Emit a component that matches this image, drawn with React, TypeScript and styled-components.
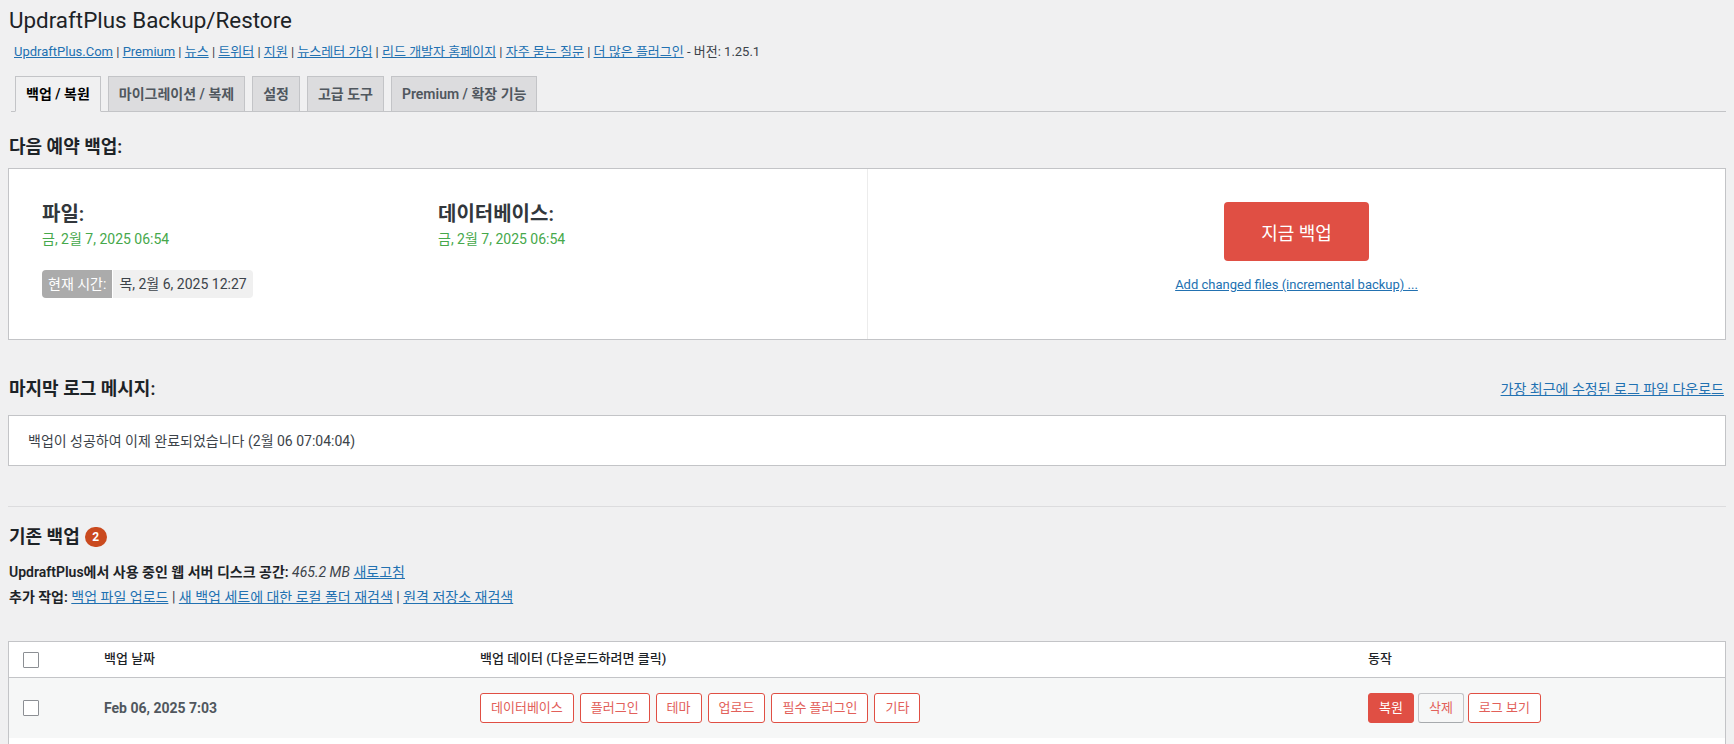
import styled, { createGlobalStyle } from 'styled-components';

const GlobalStyle = createGlobalStyle`
  html, body {
    margin: 0;
    padding: 0;
    background: #f0f0f1;
  }
  body {
    font-family: "Segoe UI", Roboto, "Noto Sans CJK KR", sans-serif;
    font-size: 13px;
    line-height: 1.4em;
    color: #3c434a;
  }
  a {
    color: #2271b1;
  }
`;

const Wrap = styled.div`
  padding: 0 8px;
`;

const Title = styled.h1`
  margin: 0;
  padding: 5px 0 0 1px;
  font-size: 22.4px;
  line-height: 30px;
  font-weight: 400;
  color: #1d2327;
`;

const LinksRow = styled.div`
  margin-top: 8px;
  padding-left: 6px;
  line-height: 18px;
  font-size: 13px;
`;

const Tabs = styled.nav`
  display: flex;
  align-items: flex-end;
  gap: 7px;
  margin: 15px 0 0 3px;
  padding-left: 4px;
  border-bottom: 1px solid #c3c4c7;
`;

const Tab = styled.a<{ $active?: boolean }>`
  margin-bottom: -1px;
  padding: 5px 10px;
  border: 1px solid #c3c4c7;
  border-bottom-color: ${(p) => (p.$active ? '#f0f0f1' : '#c3c4c7')};
  background: ${(p) => (p.$active ? '#f0f0f1' : '#dcdcde')};
  color: ${(p) => (p.$active ? '#000' : '#50575e')};
  font-size: 14px;
  line-height: 24px;
  font-weight: 600;
  text-decoration: none;
  white-space: nowrap;
`;

const SectionTitle = styled.h2<{ $top: number }>`
  margin: ${(p) => p.$top}px 0 0 1px;
  font-size: 18px;
  line-height: 24px;
  font-weight: 600;
  color: #1d2327;
  display: flex;
  align-items: center;
  gap: 5px;
`;

const ScheduleBox = styled.div`
  margin-top: 9px;
  background: #fff;
  border: 1px solid #c3c4c7;
  display: grid;
  grid-template-columns: 1fr 1fr;
`;

const ScheduleTimes = styled.div`
  padding: 32px 33px 41px;
`;

const TimesRow = styled.div`
  display: grid;
  grid-template-columns: 1fr 1fr;
`;

const TimeLabel = styled.div`
  font-size: 20px;
  line-height: 26px;
  font-weight: 600;
  color: #32373c;
`;

const TimeValue = styled.div`
  margin-top: 2px;
  font-size: 14px;
  line-height: 20px;
  color: #46a84b;
`;

const CurrentTime = styled.div`
  margin-top: 21px;
  display: inline-flex;
  height: 28px;
  border-radius: 4px;
  overflow: hidden;
  font-size: 14px;
  line-height: 28px;
`;

const CurrentLabel = styled.span`
  padding: 0 6px;
  background: #ababab;
  color: #fff;
  border-right: 1px solid #fff;
`;

const CurrentValue = styled.span`
  padding: 0 6px;
  background: #f0f0f0;
  color: #3c434a;
`;

const NowPanel = styled.div`
  border-left: 1px solid #ececec;
  display: flex;
  flex-direction: column;
  align-items: center;
  padding-top: 33px;
`;

const BackupNowButton = styled.button`
  width: 145px;
  height: 59px;
  border: none;
  border-radius: 4px;
  background: #e04f44;
  color: #fff;
  font-family: inherit;
  font-size: 18px;
  cursor: pointer;
`;

const SmallLink = styled.a`
  margin-top: 15px;
  font-size: 13px;
  line-height: 18px;
`;

const LogHeader = styled.div`
  margin-top: 37px;
  display: flex;
  justify-content: space-between;
  align-items: center;
  padding-right: 2px;
`;

const LogLink = styled.a`
  font-size: 14px;
  line-height: 24px;
`;

const LogBox = styled.div`
  margin-top: 14px;
  padding: 14px 19px 12px;
  background: #fff;
  border: 1px solid #c3c4c7;
  line-height: 23px;
  font-size: 14px;
`;

const Divider = styled.hr`
  margin: 40px 0 0;
  border: 0;
  border-top: 1px solid #dcdcde;
`;

const CountBadge = styled.span`
  display: inline-flex;
  align-items: center;
  justify-content: center;
  min-width: 22px;
  height: 20px;
  border-radius: 10px;
  background: #ca4a1f;
  color: #fff;
  font-size: 12px;
  font-weight: 700;
  line-height: 20px;
`;

const InfoLines = styled.div`
  margin-top: 11px;
  line-height: 25px;
  font-size: 14px;
  padding-left: 1px;
`;

const Label = styled.strong`
  font-weight: 600;
  color: #1d2327;
`;

const BackupTable = styled.div`
  margin-top: 31px;
  background: #fff;
  border: 1px solid #c3c4c7;
`;

const Row = styled.div<{ $head?: boolean; $alt?: boolean }>`
  display: grid;
  grid-template-columns: 85px 376px 888px 1fr;
  align-items: center;
  height: ${(p) => (p.$head ? '35px' : '60px')};
  background: ${(p) => (p.$alt ? '#f6f7f7' : '#fff')};
  border-bottom: ${(p) => (p.$head ? '1px solid #c3c4c7' : 'none')};
`;

const Cell = styled.div<{ $head?: boolean }>`
  padding-left: 10px;
  font-size: 13px;
  font-weight: ${(p) => (p.$head ? 500 : 400)};
  color: #1d2327;
  display: flex;
  align-items: center;
`;

const CheckCell = styled.div`
  padding-left: 14px;
  display: flex;
  align-items: center;
`;

const Checkbox = styled.input.attrs({ type: 'checkbox' })`
  appearance: none;
  margin: 0;
  width: 16px;
  height: 16px;
  border: 1px solid #8c8f94;
  border-radius: 1px;
  background: #fff;
`;

const BackupDate = styled.div`
  padding-left: 10px;
  font-size: 14px;
  font-weight: 700;
  color: #50575e;
`;

const ButtonGroup = styled.div<{ $gap: number }>`
  padding-left: 10px;
  display: flex;
  gap: ${(p) => p.$gap}px;
`;

const SmallButton = styled.button<{ $variant?: 'outline' | 'solid' | 'plain' }>`
  height: 30px;
  padding: 0 10px;
  border-radius: 3px;
  font-family: inherit;
  font-size: 13px;
  line-height: 28px;
  cursor: pointer;
  border: 1px solid ${(p) => (p.$variant === 'plain' ? '#c3c4c7' : '#e04f44')};
  border-bottom-color: ${(p) => (p.$variant === 'plain' ? '#a7aaad' : '#e04f44')};
  background: ${(p) =>
    p.$variant === 'solid' ? '#e04f44' : p.$variant === 'plain' ? '#f6f7f7' : '#fff'};
  color: ${(p) => (p.$variant === 'solid' ? '#fff' : '#e2605a')};
`;

const links = [
  'UpdraftPlus.Com',
  'Premium',
  '뉴스',
  '트위터',
  '지원',
  '뉴스레터 가입',
  '리드 개발자 홈페이지',
  '자주 묻는 질문',
  '더 많은 플러그인',
];

const tabs = ['백업 / 복원', '마이그레이션 / 복제', '설정', '고급 도구', 'Premium / 확장 기능'];

const entities = ['데이터베이스', '플러그인', '테마', '업로드', '필수 플러그인', '기타'];

const backups = [
  { date: 'Feb 06, 2025 7:03', alt: true },
  { date: 'Feb 06, 2025 6:54', alt: false },
];

const App = () => {
  return (
    <Wrap>
      <GlobalStyle />
      <Title>UpdraftPlus Backup/Restore</Title>
      <LinksRow>
        {links.map((l, i) => (
          <span key={l}>
            <a href="#">{l}</a>
            {i < links.length - 1 ? ' | ' : ''}
          </span>
        ))}{' '}
        - 버전: 1.25.1
      </LinksRow>

      <Tabs>
        {tabs.map((t, i) => (
          <Tab key={t} href="#" $active={i === 0}>
            {t}
          </Tab>
        ))}
      </Tabs>

      <SectionTitle $top={23}>다음 예약 백업:</SectionTitle>
      <ScheduleBox>
        <ScheduleTimes>
          <TimesRow>
            <div>
              <TimeLabel>파일:</TimeLabel>
              <TimeValue>금, 2월 7, 2025 06:54</TimeValue>
            </div>
            <div>
              <TimeLabel>데이터베이스:</TimeLabel>
              <TimeValue>금, 2월 7, 2025 06:54</TimeValue>
            </div>
          </TimesRow>
          <CurrentTime>
            <CurrentLabel>현재 시간:</CurrentLabel>
            <CurrentValue>목, 2월 6, 2025 12:27</CurrentValue>
          </CurrentTime>
        </ScheduleTimes>
        <NowPanel>
          <BackupNowButton>지금 백업</BackupNowButton>
          <SmallLink href="#">Add changed files (incremental backup) ...</SmallLink>
        </NowPanel>
      </ScheduleBox>

      <LogHeader>
        <SectionTitle $top={0}>마지막 로그 메시지:</SectionTitle>
        <LogLink href="#">가장 최근에 수정된 로그 파일 다운로드</LogLink>
      </LogHeader>
      <LogBox>백업이 성공하여 이제 완료되었습니다 (2월 06 07:04:04)</LogBox>

      <Divider />

      <SectionTitle $top={18}>
        기존 백업 <CountBadge>2</CountBadge>
      </SectionTitle>
      <InfoLines>
        <div>
          <Label>UpdraftPlus에서 사용 중인 웹 서버 디스크 공간:</Label> <em>465.2 MB</em>{' '}
          <a href="#">새로고침</a>
        </div>
        <div>
          <Label>추가 작업:</Label> <a href="#">백업 파일 업로드</a> |{' '}
          <a href="#">새 백업 세트에 대한 로컬 폴더 재검색</a> | <a href="#">원격 저장소 재검색</a>
        </div>
      </InfoLines>

      <BackupTable>
        <Row $head>
          <CheckCell>
            <Checkbox />
          </CheckCell>
          <Cell $head>백업 날짜</Cell>
          <Cell $head>백업 데이터 (다운로드하려면 클릭)</Cell>
          <Cell $head>동작</Cell>
        </Row>
        {backups.map((b) => (
          <Row key={b.date} $alt={b.alt}>
            <CheckCell>
              <Checkbox />
            </CheckCell>
            <BackupDate>{b.date}</BackupDate>
            <ButtonGroup $gap={6}>
              {entities.map((e) => (
                <SmallButton key={e}>{e}</SmallButton>
              ))}
            </ButtonGroup>
            <ButtonGroup $gap={4}>
              <SmallButton $variant="solid">복원</SmallButton>
              <SmallButton $variant="plain">삭제</SmallButton>
              <SmallButton>로그 보기</SmallButton>
            </ButtonGroup>
          </Row>
        ))}
      </BackupTable>
    </Wrap>
  );
};

export default App;
